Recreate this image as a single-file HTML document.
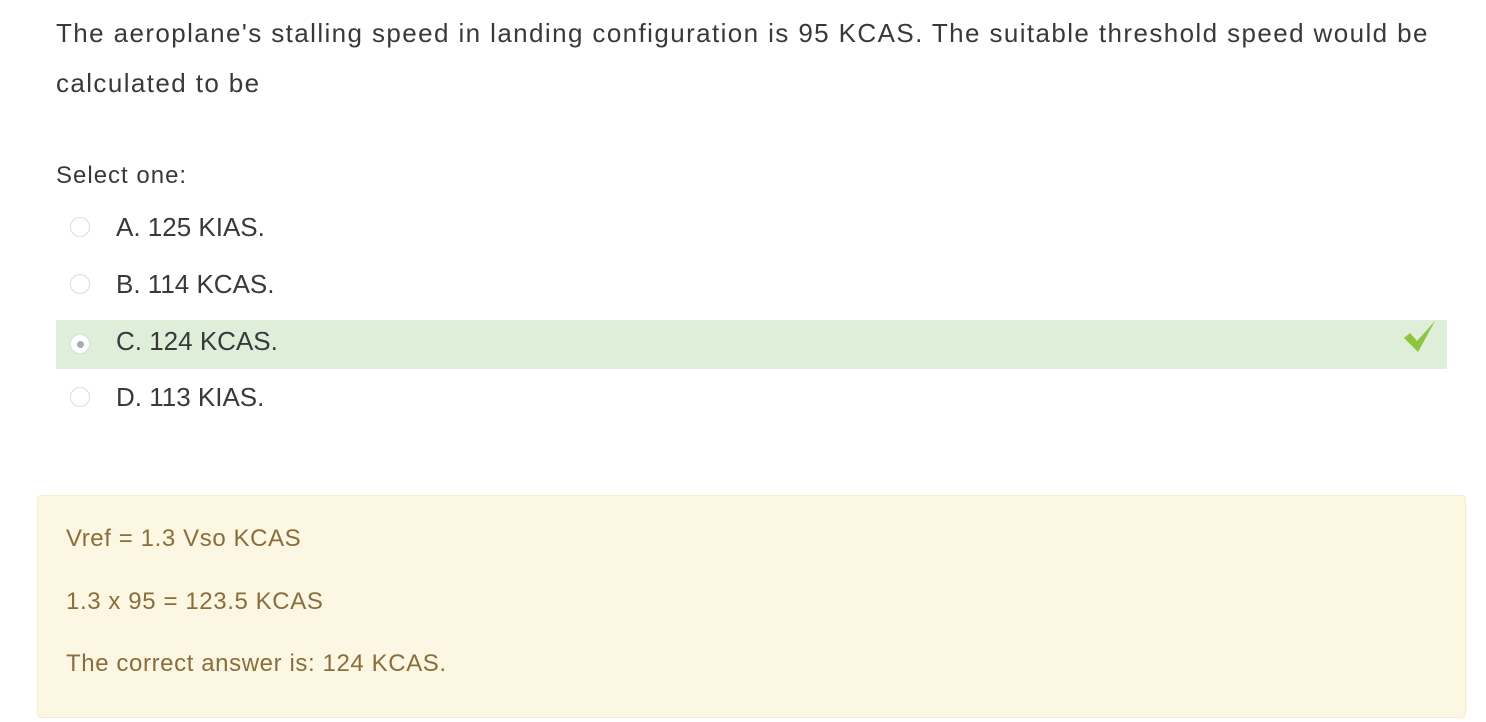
<!DOCTYPE html>
<html><head><style>
body{margin:0;width:1486px;height:722px;background:#fff;font-family:"Liberation Sans",sans-serif;color:#373a3c;position:relative;overflow:hidden}
.t{position:absolute;white-space:nowrap}
.q{left:56px;font-size:26px;letter-spacing:1.4px}
.opt{position:absolute;left:56px;width:1391px;height:49px}
.r{position:absolute;left:14px;top:14px;width:20px;height:20px;border-radius:50%;border:1px solid #ddd;box-sizing:border-box;background:#fff}
.ot{position:absolute;left:60px;top:9px;font-size:26px}
.fb{position:absolute;left:37px;top:495px;width:1429px;height:223px;background:#fcf7e3;border:1px solid #f8ecc9;border-radius:4px;box-sizing:border-box}
.f{position:absolute;left:66px;font-size:24px;color:#8a6d3b;letter-spacing:0.6px}
</style></head><body>
<div class="t q" style="top:18px">The aeroplane's stalling speed in landing configuration is 95 KCAS. The suitable threshold speed would be</div>
<div class="t q" style="top:68px">calculated to be</div>
<div class="t" style="left:56px;top:162px;font-size:24px;letter-spacing:1px">Select one:</div>
<div class="opt" style="top:203px"><div class="r"></div><div class="ot">A. 125 KIAS.</div></div>
<div class="opt" style="top:260px"><div class="r"></div><div class="ot">B. 114 KCAS.</div></div>
<div class="opt" style="top:320px;background:#dfeed8"><div class="r"><div style="position:absolute;left:6px;top:6px;width:7px;height:7px;border-radius:50%;background:#aaa"></div></div><div class="ot" style="top:6px">C. 124 KCAS.</div>
<svg style="position:absolute;left:1346px;top:0" width="34" height="34" viewBox="0 0 34 34"><path d="M2 18 L8 13 L15 21 L33 1 L16 32 Z" fill="#8cc63f"/></svg></div>
<div class="opt" style="top:373px"><div class="r"></div><div class="ot">D. 113 KIAS.</div></div>
<div class="fb"></div>
<div class="t f" style="top:525px">Vref = 1.3 Vso KCAS</div>
<div class="t f" style="top:588px">1.3 x 95 = 123.5 KCAS</div>
<div class="t f" style="top:650px">The correct answer is: 124 KCAS.</div>
</body></html>
